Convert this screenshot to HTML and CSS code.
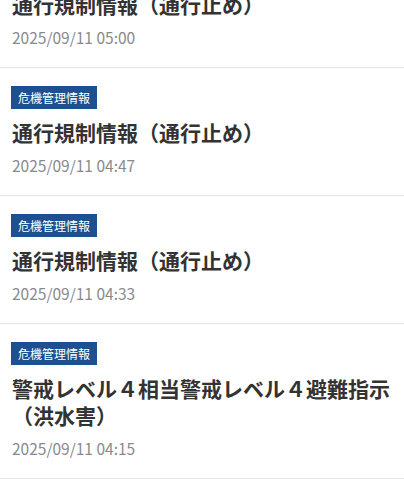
FILE: index.html
```html
<!DOCTYPE html>
<html lang="ja">
<head>
<meta charset="utf-8">
<title>危機管理情報</title>
<link rel="stylesheet" href="styles.css">
</head>
<body>
<ul class="news-list">
  <li class="news-item">
    <span class="tag">危機管理情報</span>
    <h2 class="news-title">通行規制情報（通行止め）</h2>
    <time class="news-date">2025/09/11 05:00</time>
  </li>
  <li class="news-item">
    <span class="tag">危機管理情報</span>
    <h2 class="news-title">通行規制情報（通行止め）</h2>
    <time class="news-date">2025/09/11 04:47</time>
  </li>
  <li class="news-item">
    <span class="tag">危機管理情報</span>
    <h2 class="news-title">通行規制情報（通行止め）</h2>
    <time class="news-date">2025/09/11 04:33</time>
  </li>
  <li class="news-item">
    <span class="tag">危機管理情報</span>
    <h2 class="news-title">警戒レベル４相当警戒レベル４避難指示（洪水害）</h2>
    <time class="news-date">2025/09/11 04:15</time>
  </li>
</ul>
</body>
</html>
```

FILE: styles.css
```css
html, body {
  margin: 0;
  padding: 0;
  background: #ffffff;
}

body {
  font-family: "Noto Sans CJK JP", "Noto Sans", sans-serif;
  color: #333333;
  overflow: hidden;
}

.news-list {
  list-style: none;
  margin: -60px 0 0 0;
  padding: 0;
}

.news-item {
  display: flex;
  flex-direction: column;
  align-items: flex-start;
  padding: 18px 12px 18px 12px;
  border-bottom: 1px solid #e6e6e6;
}

.tag {
  display: inline-flex;
  align-items: center;
  height: 23px;
  padding: 0 7px 0 7px;
  margin-left: -1px;
  background: #1e4f8e;
  color: #ffffff;
  font-size: 12px;
  line-height: 1;
}

.news-title {
  margin: 10px 0 0 0;
  font-size: 21px;
  line-height: 27px;
  font-weight: 700;
  color: #333333;
}

.news-date {
  display: block;
  margin-top: 8px;
  font-size: 15.5px;
  line-height: 23px;
  color: #8a8a8a;
}
```
